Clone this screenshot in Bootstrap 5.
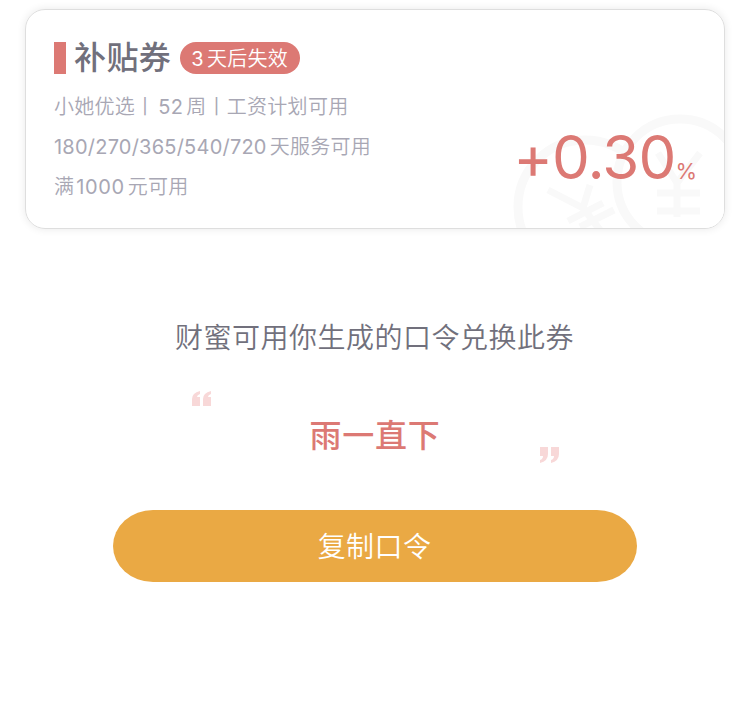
<!DOCTYPE html>
<html lang="zh-CN">
<head>
<meta charset="utf-8">
<meta name="viewport" content="width=device-width, initial-scale=1">
<title>补贴券</title>
<link href="https://cdn.jsdelivr.net/npm/bootstrap@5.3.0/dist/css/bootstrap.min.css" rel="stylesheet">
<style>
body{background:#fff;color:#71707c;font-family:"Inter","Noto Sans CJK SC",sans-serif;font-weight:350}
.coupon{width:700px;height:220px;margin:9px 0 0 25px;padding:28px 28px 0 28px;border:1px solid #dedede;border-radius:20px;box-shadow:0 0 8px rgba(0,0,0,.09)}
.coupon-head{height:40px}
.coupon-bar{width:12px;height:32px;background:#dc7974;margin-right:8px}
.coupon-title{font-size:32px;line-height:40px;font-weight:500;letter-spacing:.4px;margin-right:9px}
.coupon-tag{height:32px;width:120px;background:#dc7974;font-size:20px;line-height:34px;letter-spacing:.3px;padding-right:1px}
.coupon-terms{font-size:20px;line-height:40px;letter-spacing:.27px;color:#a8a7b4;margin-top:9px}
.num{margin-right:3px;font-weight:400}
.num-range{letter-spacing:.22px}
.num-amount{letter-spacing:.6px;margin-left:2px}
.gap-before{margin-left:3px}
.rate{right:27px;bottom:41px;color:#dc7974;line-height:1;font-weight:400}
.rate-value{font-size:60px;letter-spacing:-.9px}
.rate-unit{font-size:22px}
.coins{right:0;bottom:0}
.lead-text{font-size:28px;line-height:40px;letter-spacing:.5px;margin-top:89px;padding-right:1px}
.code-box{width:368px;height:72px;margin:33px auto 0 192px}
.code-text{font-size:32px;line-height:40px;font-weight:500;color:#dc7974;letter-spacing:.7px;padding:25px 2px 0 0}
.copy-btn,.copy-btn:hover{width:524px;height:72px;margin:47px 0 0 113px;padding:8px 13px 6px 12px;background:#eaa944;color:#fff;font-size:28px;font-weight:350;letter-spacing:.4px;line-height:40px;border:0;border-radius:40px/36px}
</style>
<script src="https://cdn.jsdelivr.net/npm/bootstrap@5.3.0/dist/js/bootstrap.bundle.min.js"></script>
</head>
<body>
<main class="d-flow-root overflow-hidden">
<section class="coupon position-relative overflow-hidden">
  <svg class="coins position-absolute" width="212" height="116" viewBox="0 0 212 116" fill="none" stroke="#f9f9f9" stroke-width="9">
    <circle cx="73" cy="95" r="67"/>
    <circle cx="168" cy="70" r="63" fill="#fff"/>
    <path d="M36 78L71 96M78 73L71 96L88 118M56 109L91 91M68 115L102 98" stroke-width="7"/>
    <path d="M146 41L165 71L188 41M165 71V105M145 81H188M145 99H188" stroke-width="7"/>
  </svg>
  <div class="coupon-head d-flex align-items-center">
    <span class="coupon-bar"></span>
    <span class="coupon-title">补贴券</span>
    <span class="coupon-tag rounded-pill text-white text-center"><span class="num">3</span>天后失效</span>
  </div>
  <div class="coupon-terms position-relative">
    <div>小她优选丨<span class="num gap-before">52</span>周丨工资计划可用</div>
    <div><span class="num num-range">180/270/365/540/720</span>天服务可用</div>
    <div>满<span class="num num-amount">1000</span>元可用</div>
  </div>
  <div class="rate position-absolute d-flex align-items-baseline"><span class="rate-value">+0.30</span><span class="rate-unit">%</span></div>
</section>
<p class="lead-text text-center mb-0">财蜜可用你生成的口令兑换此券</p>
<div class="code-box d-flex justify-content-between">
  <svg width="20" height="16" viewBox="0 0 20 16" fill="#f8d8d8"><path d="M8 0V3Q5 4 5 6H8V15H0V8Q0 2 8 0Z"/><path d="M19 0V3Q16 4 16 6H19V15H11V8Q11 2 19 0Z"/></svg>
  <div class="code-text">雨一直下</div>
  <svg class="align-self-end" width="20" height="16" viewBox="0 0 20 16" fill="#f8d8d8"><path d="M0 16V13Q3 12 3 9H0V0H8V7Q8 14 0 16Z"/><path d="M11 16V13Q14 12 14 9H11V0H19V7Q19 14 11 16Z"/></svg>
</div>
<button type="button" class="btn copy-btn d-block">复制口令</button>
</main>
</body>
</html>
